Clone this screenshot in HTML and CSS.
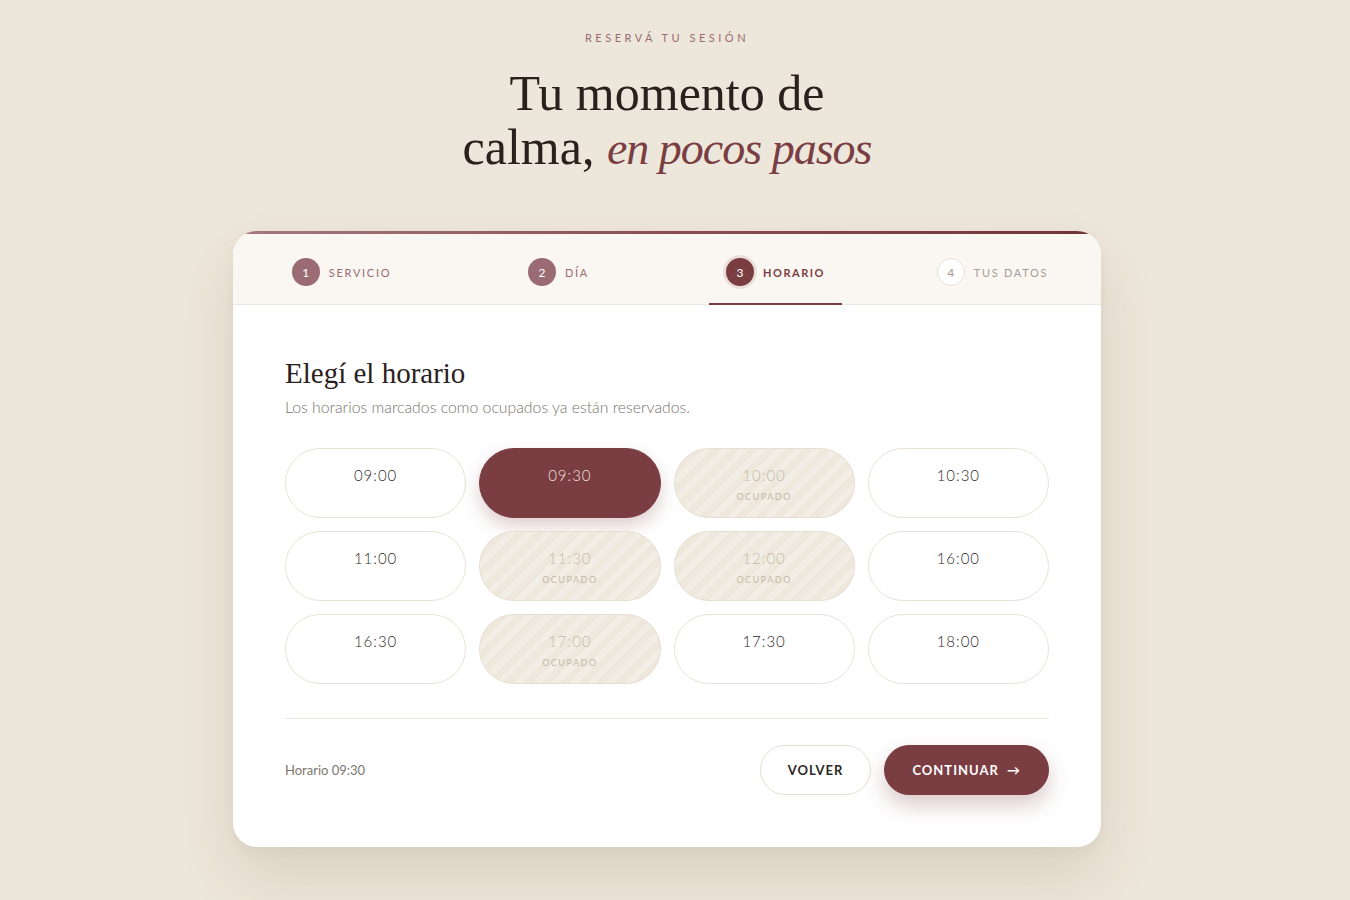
FILE: index.html
```html
<!DOCTYPE html>
<html lang="es">
<head>
<meta charset="utf-8">
<title>Reservá tu sesión</title>
<link rel="stylesheet" href="styles.css">
</head>
<body>
<div class="page">
  <header class="intro">
    <p class="eyebrow">RESERVÁ TU SESIÓN</p>
    <h1 class="headline">Tu momento de<br>calma, <em>en pocos pasos</em></h1>
  </header>

  <section class="card">
    <div class="card-bar"></div>
    <nav class="steps">
      <div class="step-cell"><div class="step done"><span class="num">1</span><span class="label">SERVICIO</span></div></div>
      <div class="step-cell"><div class="step done"><span class="num">2</span><span class="label">DÍA</span></div></div>
      <div class="step-cell"><div class="step active"><span class="num">3</span><span class="label">HORARIO</span></div></div>
      <div class="step-cell"><div class="step todo"><span class="num">4</span><span class="label">TUS DATOS</span></div></div>
    </nav>

    <div class="card-body">
      <h2 class="title">Elegí el horario</h2>
      <p class="subtitle">Los horarios marcados como ocupados ya están reservados.</p>

      <div class="slots">
        <div class="slot"><span class="time">09:00</span></div>
        <div class="slot selected"><span class="time">09:30</span></div>
        <div class="slot taken"><span class="time">10:00</span><span class="note">OCUPADO</span></div>
        <div class="slot"><span class="time">10:30</span></div>
        <div class="slot"><span class="time">11:00</span></div>
        <div class="slot taken"><span class="time">11:30</span><span class="note">OCUPADO</span></div>
        <div class="slot taken"><span class="time">12:00</span><span class="note">OCUPADO</span></div>
        <div class="slot"><span class="time">16:00</span></div>
        <div class="slot"><span class="time">16:30</span></div>
        <div class="slot taken"><span class="time">17:00</span><span class="note">OCUPADO</span></div>
        <div class="slot"><span class="time">17:30</span></div>
        <div class="slot"><span class="time">18:00</span></div>
      </div>

      <div class="footer">
        <span class="summary">Horario 09:30</span>
        <div class="actions">
          <button class="btn btn-ghost">VOLVER</button>
          <button class="btn btn-primary">CONTINUAR <span class="arrow">→</span></button>
        </div>
      </div>
    </div>
  </section>
</div>
</body>
</html>
```

FILE: styles.css
```css
* { box-sizing: border-box; }

html, body {
  margin: 0;
  padding: 0;
  background: #ede6da;
}

body {
  font-family: "Lato", "Noto Sans", sans-serif;
  color: #2d2926;
}

.page {
  width: 1334px;
  padding-top: 30px;
  padding-bottom: 60px;
}

.intro {
  text-align: center;
}

.eyebrow {
  margin: 0;
  font-size: 11px;
  line-height: 16px;
  letter-spacing: 3.5px;
  color: #9b6b73;
  font-weight: 400;
}

.headline {
  margin: 20px 0 0;
  font-family: "Liberation Serif", serif;
  font-weight: 400;
  font-size: 50px;
  line-height: 54px;
  color: #2a211d;
}

.headline em {
  font-style: italic;
  font-size: 46px;
  line-height: 40px;
  letter-spacing: -1px;
  color: #7a3d42;
}

.card {
  width: 868px;
  margin: 57px auto 0;
  background: #ffffff;
  border-radius: 24px;
  overflow: hidden;
  box-shadow: 0 30px 60px rgba(90, 70, 45, 0.13), 0 4px 12px rgba(90, 70, 45, 0.05);
}

.card-bar {
  height: 3px;
  background: linear-gradient(90deg, #a8777f 0%, #8a4e55 50%, #6f3338 100%);
}

.steps {
  display: flex;
  background: #faf7f2;
  border-bottom: 1px solid #eee8de;
}

.step-cell {
  flex: 1;
  display: flex;
  justify-content: center;
}

.step {
  display: flex;
  align-items: center;
  gap: 9px;
  padding: 24px 17px 17px;
  border-bottom: 2px solid transparent;
  margin-bottom: -1px;
}

.step .num {
  width: 28px;
  height: 28px;
  border-radius: 50%;
  display: flex;
  align-items: center;
  justify-content: center;
  font-size: 12px;
  font-weight: 400;
}

.step .label {
  font-size: 11px;
  letter-spacing: 1.7px;
  font-weight: 400;
}

.step.done .num {
  background: #9b6b73;
  color: #fff;
}

.step.done .label {
  color: #9b6b73;
}

.step.active {
  border-bottom-color: #7a3d42;
}

.step.active .num {
  background: #7a3d42;
  color: #fff;
  box-shadow: 0 0 0 3px #eadfd8;
}

.step.active .label {
  color: #7a3d42;
  font-weight: 700;
  letter-spacing: 1.5px;
}

.step.todo .num {
  background: #ffffff;
  border: 1px solid #e8e1d6;
  color: #9f988f;
}

.step.todo .label {
  color: #a39d94;
}

.card-body {
  padding: 50px 52px 52px;
}

.title {
  margin: 0;
  font-family: "Liberation Serif", serif;
  font-weight: 400;
  font-size: 29px;
  line-height: 36px;
  color: #2a211d;
}

.subtitle {
  margin: 5px 0 0;
  font-size: 15.8px;
  line-height: 22px;
  font-weight: 300;
  color: #7a746c;
}

.slots {
  margin-top: 30px;
  display: grid;
  grid-template-columns: repeat(4, 1fr);
  gap: 13px;
}

.slot {
  height: 70px;
  border-radius: 35px;
  border: 1px solid #e9e2d5;
  background: #ffffff;
  display: flex;
  flex-direction: column;
  align-items: center;
  padding-top: 16px;
}

.slot .time {
  font-size: 15px;
  line-height: 20px;
  letter-spacing: 1px;
  color: #2f2a26;
  font-weight: 300;
}

.slot .note {
  margin-top: 6px;
  font-size: 9px;
  line-height: 12px;
  letter-spacing: 1.5px;
  color: #c2b8a8;
}

.slot.selected {
  background: #7a3d42;
  border-color: #7a3d42;
  box-shadow: 0 8px 18px rgba(122, 61, 66, 0.25);
}

.slot.selected .time {
  color: #f1e2de;
}

.slot.taken {
  border-color: #e6dfd1;
  background-color: #eee7db;
  background-image: repeating-linear-gradient(135deg, #eee7db 0px, #eee7db 7px, #f3eee5 7px, #f3eee5 13px);
}

.slot.taken .time {
  color: #c4baab;
}

.footer {
  margin-top: 34px;
  padding-top: 26px;
  border-top: 1px solid #efe9df;
  display: flex;
  align-items: center;
  justify-content: space-between;
}

.summary {
  font-size: 13px;
  color: #7d776e;
  font-weight: 400;
}

.actions {
  display: flex;
  gap: 13px;
}

.btn {
  height: 50px;
  border-radius: 25px;
  padding: 0 27px;
  font-family: "Lato", "Noto Sans", sans-serif;
  font-size: 13px;
  font-weight: 700;
  letter-spacing: 1px;
  cursor: pointer;
}

.btn-ghost {
  background: #ffffff;
  border: 1px solid #e6dfd2;
  color: #2d2926;
}

.btn-primary {
  background: #7a3d42;
  border: 1px solid #7a3d42;
  color: #ffffff;
  box-shadow: 0 10px 22px rgba(122, 61, 66, 0.28);
}

.btn-primary .arrow {
  margin-left: 4px;
}
```
